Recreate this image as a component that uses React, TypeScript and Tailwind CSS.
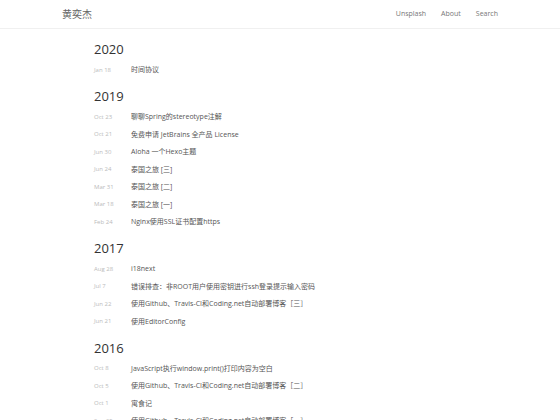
const posts: { year: string; items: [string, string][] }[] = [
  { year: '2020', items: [['Jan 18', '时间协议']] },
  {
    year: '2019',
    items: [
      ['Oct 23', '聊聊Spring的stereotype注解'],
      ['Oct 21', '免费申请 JetBrains 全产品 License'],
      ['Jun 30', 'Aloha 一个Hexo主题'],
      ['Jun 24', '泰国之旅 [三]'],
      ['Mar 31', '泰国之旅 [二]'],
      ['Mar 18', '泰国之旅 [一]'],
      ['Feb 24', 'Nginx使用SSL证书配置https'],
    ],
  },
  {
    year: '2017',
    items: [
      ['Aug 28', 'i18next'],
      ['Jul 7', '错误排查：非ROOT用户使用密钥进行ssh登录提示输入密码'],
      ['Jun 22', '使用Github、Travis-CI和Coding.net自动部署博客［三］'],
      ['Jun 21', '使用EditorConfig'],
    ],
  },
  {
    year: '2016',
    items: [
      ['Oct 8', 'JavaScript执行window.print()打印内容为空白'],
      ['Oct 5', '使用Github、Travis-CI和Coding.net自动部署博客［二］'],
      ['Oct 1', '寓食记'],
      ['Sep 25', '使用Github、Travis-CI和Coding.net自动部署博客［一］'],
    ],
  },
];

export default function App() {
  return (
    <div
      className="min-h-screen bg-white"
      style={{ fontFamily: '"Open Sans", "Noto Sans CJK SC", sans-serif' }}
    >
      <header className="border-b border-[#f0f0f0]">
        <div className="w-[436px] mx-auto h-[28px] flex items-center justify-between">
          <a className="text-[10px] text-[#666]">黄奕杰</a>
          <nav className="flex gap-[15px] text-[7px] text-[#777]">
            <a>Unsplash</a>
            <a>About</a>
            <a>Search</a>
          </nav>
        </div>
      </header>

      <main className="w-[372px] mx-auto pt-[9px]">
        {posts.map((group, i) => (
          <section key={group.year} className={i === 0 ? '' : 'mt-[6px]'}>
            <h2 className="h-[23.5px] flex items-center text-[13px] text-[#333] leading-none">
              {group.year}
            </h2>
            {group.items.map(([date, title]) => (
              <div key={date + title} className="h-[17.5px] flex items-center">
                <span className="w-[37px] shrink-0 text-[6px] text-[#bbb]">{date}</span>
                <a className="text-[7px] text-[#555] whitespace-nowrap">{title}</a>
              </div>
            ))}
          </section>
        ))}
      </main>
    </div>
  );
}
